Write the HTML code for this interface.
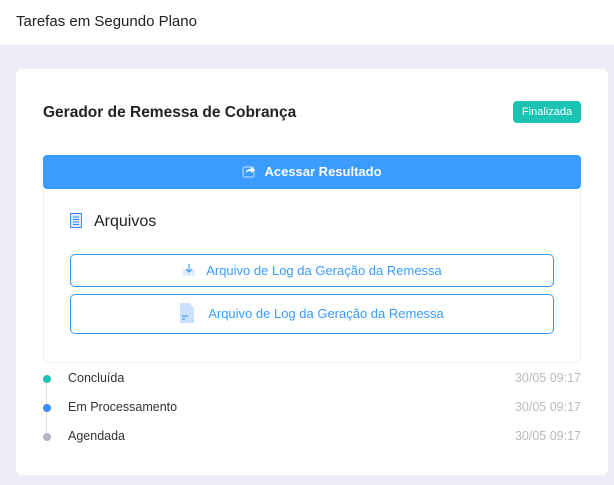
<!DOCTYPE html>
<html><head><meta charset="utf-8"><style>
*{box-sizing:border-box;margin:0;padding:0}
body{width:614px;height:485px;background:#ebecf4;font-family:"Liberation Sans",sans-serif;position:relative;overflow:hidden}
.hdr{position:absolute;left:0;top:0;width:614px;height:45px;background:#fff;font-size:15px;color:#222;padding:13px 0 0 16px}
.card{position:absolute;left:16px;top:69px;width:592px;height:406px;background:#fff;border-radius:5px}
.abs{position:absolute}
.title{left:27px;top:35px;font-size:15.5px;font-weight:bold;color:#222}
.badge{left:497px;top:32px;width:68px;height:22px;background:#1cc3b2;color:#fff;border-radius:4px;font-size:11px;text-align:center;line-height:22px}
.btn{left:27px;top:86px;width:538px;height:34px;background:#3a9cff;border-radius:4px;color:#fff;font-size:13px;font-weight:bold;text-align:center;line-height:34px}
.box{left:27px;top:120px;width:538px;height:174px;border:1px solid #eceef2;border-top:none;border-radius:0 0 5px 5px}
.fb{left:54px;width:484px;border:1px solid #3a9cff;border-radius:5px;color:#3a9cff;font-size:13px;text-align:center}
.tl{left:27px;font-size:12.5px;color:#333}
.dot{position:absolute;left:0;top:4px;width:8px;height:8px;border-radius:50%}
.tm{right:27px;font-size:12.5px;color:#bbb}
</style></head><body>
<div class="hdr">Tarefas em Segundo Plano</div>
<div class="card">
<div class="abs title">Gerador de Remessa de Cobrança</div>
<div class="abs badge">Finalizada</div>
<div class="abs btn"><svg width="14" height="14" viewBox="0 0 14 14" style="vertical-align:-2px;margin-right:8px"><rect x="1" y="3" width="11" height="10" rx="2" fill="none" stroke="#9cc9ff" stroke-width="1.5"/><path d="M4 9 C4 6 6 5 9 5 V3 L13 6 L9 9 V7 C7 7 5 7.5 4 9Z" fill="#fff"/></svg>Acessar Resultado</div>
<div class="abs box"></div>
<div class="abs" style="left:54px;top:144px;font-size:16px;color:#222"><svg width="12" height="15" viewBox="0 0 12 15" style="vertical-align:-2px;margin-right:12px"><rect x="0.5" y="0.5" width="11" height="14" fill="#dbe9ff" stroke="#3a8cff"/><path d="M3 4H9M3 6.5H9M3 9H9M3 11.5H9" stroke="#3a8cff"/></svg>Arquivos</div>
<div class="abs fb" style="top:185px;height:33px;line-height:31px"><svg width="14" height="14" viewBox="0 0 14 14" style="vertical-align:-2px;margin-right:10px"><rect x="1" y="6" width="12" height="7" rx="1" fill="#e3efff"/><path d="M7 1V9M4 6L7 9L10 6" stroke="#3a9cff" fill="none" stroke-width="1.2"/></svg>Arquivo de Log da Geração da Remessa</div>
<div class="abs fb" style="top:225px;height:40px;line-height:38px"><svg width="14" height="20" viewBox="0 0 14 20" style="vertical-align:-5px;margin-right:14px"><path d="M0 0H9L14 5V20H0Z" fill="#c9e0ff"/><path d="M2 13H8M2 16H5" stroke="#3a9cff" stroke-width="1.3"/></svg>Arquivo de Log da Geração da Remessa</div>
<div class="abs" style="left:30px;top:312px;width:1px;height:58px;background:#ddd"></div>
<div class="abs tl" style="top:302px;width:200px"><span class="dot" style="background:#1cc3b2"></span><span style="margin-left:25px">Concluída</span></div>
<div class="abs tm" style="top:302px">30/05 09:17</div>
<div class="abs tl" style="top:331px;width:200px"><span class="dot" style="background:#3a8cff"></span><span style="margin-left:25px">Em Processamento</span></div>
<div class="abs tm" style="top:331px">30/05 09:17</div>
<div class="abs tl" style="top:360px;width:200px"><span class="dot" style="background:#b4b4bf"></span><span style="margin-left:25px">Agendada</span></div>
<div class="abs tm" style="top:360px">30/05 09:17</div>
</div>
</body></html>
